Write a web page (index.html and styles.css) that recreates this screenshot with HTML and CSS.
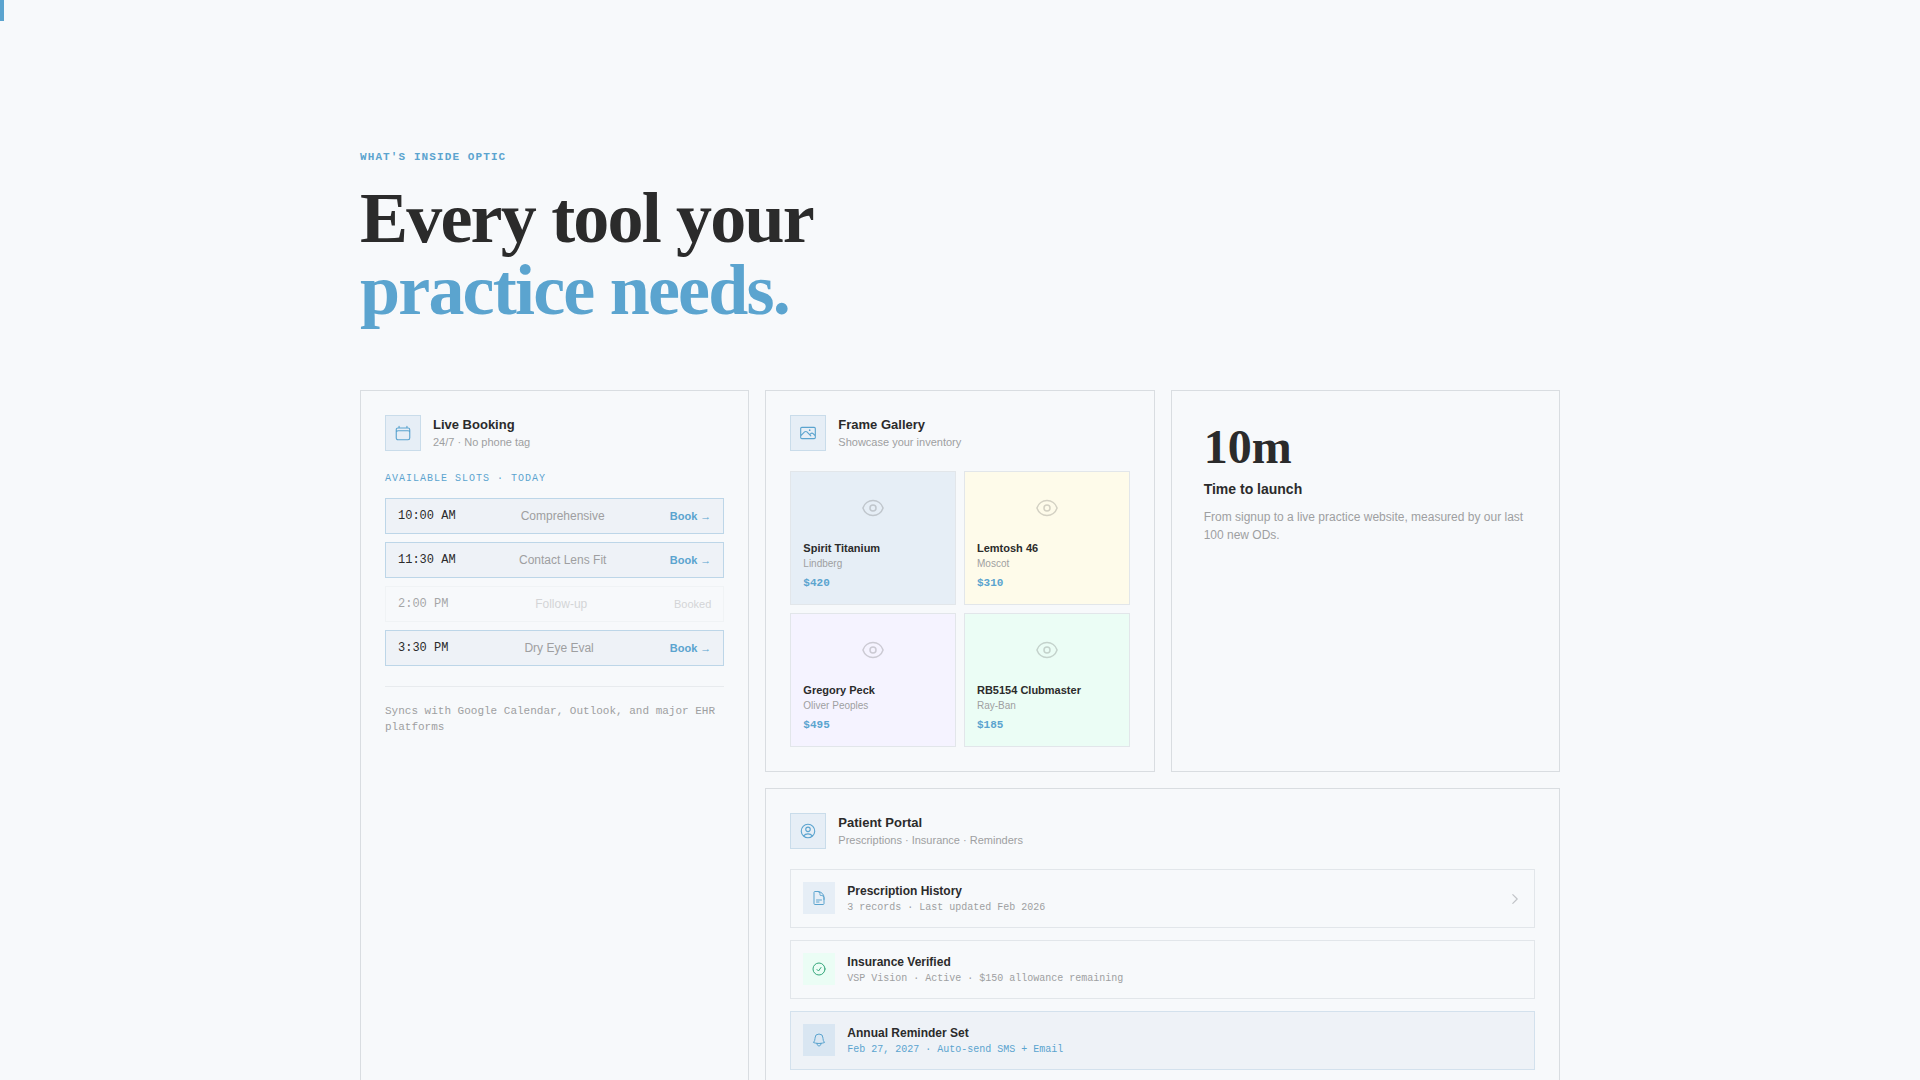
FILE: index.html
```
<!DOCTYPE html>
<html lang="en">
<head>
    <meta charset="UTF-8">
    <meta name="viewport" content="width=device-width, initial-scale=1.0">
    <title>Optic - Features</title>
    <link rel="stylesheet" href="styles.css">
</head>
<body>

    <div class="scroll-progress"></div>

    <section class="features">
        <p class="eyebrow">WHAT'S INSIDE OPTIC</p>
        <h1>Every tool your<br><span class="accent">practice needs.</span></h1>

        <div class="bento">

            <!-- Live booking -->
            <article class="card card-booking">
                <header class="card-head">
                    <span class="icon-box">
                        <svg class="icon" viewBox="0 0 24 24"><path d="M6.75 3v2.25M17.25 3v2.25M3 18.75V7.5a2.25 2.25 0 0 1 2.25-2.25h13.5A2.25 2.25 0 0 1 21 7.5v11.25m-18 0A2.25 2.25 0 0 0 5.25 21h13.5A2.25 2.25 0 0 0 21 18.75m-18 0v-7.5A2.25 2.25 0 0 1 5.25 9h13.5A2.25 2.25 0 0 1 21 11.25v7.5"/></svg>
                    </span>
                    <div>
                        <h2>Live Booking</h2>
                        <p>24/7 · No phone tag</p>
                    </div>
                </header>
                <p class="slots-label">AVAILABLE SLOTS · TODAY</p>
                <ul class="slots">
                    <li class="slot"><span class="time">10:00 AM</span><span class="type">Comprehensive</span><button type="button">Book →</button></li>
                    <li class="slot"><span class="time">11:30 AM</span><span class="type">Contact Lens Fit</span><button type="button">Book →</button></li>
                    <li class="slot booked"><span class="time">2:00 PM</span><span class="type">Follow-up</span><span class="status">Booked</span></li>
                    <li class="slot"><span class="time">3:30 PM</span><span class="type">Dry Eye Eval</span><button type="button">Book →</button></li>
                </ul>
                <p class="sync-note">Syncs with Google Calendar, Outlook, and major EHR platforms</p>
            </article>

            <!-- Frame gallery -->
            <article class="card">
                <header class="card-head">
                    <span class="icon-box">
                        <svg class="icon" viewBox="0 0 24 24"><path d="m2.25 15.75 5.159-5.159a2.25 2.25 0 0 1 3.182 0l5.159 5.159m-1.5-1.5 1.409-1.409a2.25 2.25 0 0 1 3.182 0l2.909 2.909m-18 3.75h16.5a1.5 1.5 0 0 0 1.5-1.5V6a1.5 1.5 0 0 0-1.5-1.5H3.75A1.5 1.5 0 0 0 2.25 6v12a1.5 1.5 0 0 0 1.5 1.5Zm10.5-11.25h.008v.008h-.008V8.25Zm.375 0a.375.375 0 1 1-.75 0 .375.375 0 0 1 .75 0Z"/></svg>
                    </span>
                    <div>
                        <h2>Frame Gallery</h2>
                        <p>Showcase your inventory</p>
                    </div>
                </header>
                <div class="frames">
                    <div class="frame blue">
                        <div class="frame-preview"><svg class="icon eye" viewBox="0 0 24 24"><path d="M2.036 12.322a1.012 1.012 0 0 1 0-.639C3.423 7.51 7.36 4.5 12 4.5c4.638 0 8.573 3.007 9.963 7.178.07.207.07.431 0 .639C20.577 16.49 16.64 19.5 12 19.5c-4.638 0-8.573-3.007-9.963-7.178Z"/><path d="M15 12a3 3 0 1 1-6 0 3 3 0 0 1 6 0Z"/></svg></div>
                        <h3>Spirit Titanium</h3>
                        <p class="brand">Lindberg</p>
                        <p class="price">$420</p>
                    </div>
                    <div class="frame yellow">
                        <div class="frame-preview"><svg class="icon eye" viewBox="0 0 24 24"><path d="M2.036 12.322a1.012 1.012 0 0 1 0-.639C3.423 7.51 7.36 4.5 12 4.5c4.638 0 8.573 3.007 9.963 7.178.07.207.07.431 0 .639C20.577 16.49 16.64 19.5 12 19.5c-4.638 0-8.573-3.007-9.963-7.178Z"/><path d="M15 12a3 3 0 1 1-6 0 3 3 0 0 1 6 0Z"/></svg></div>
                        <h3>Lemtosh 46</h3>
                        <p class="brand">Moscot</p>
                        <p class="price">$310</p>
                    </div>
                    <div class="frame purple">
                        <div class="frame-preview"><svg class="icon eye" viewBox="0 0 24 24"><path d="M2.036 12.322a1.012 1.012 0 0 1 0-.639C3.423 7.51 7.36 4.5 12 4.5c4.638 0 8.573 3.007 9.963 7.178.07.207.07.431 0 .639C20.577 16.49 16.64 19.5 12 19.5c-4.638 0-8.573-3.007-9.963-7.178Z"/><path d="M15 12a3 3 0 1 1-6 0 3 3 0 0 1 6 0Z"/></svg></div>
                        <h3>Gregory Peck</h3>
                        <p class="brand">Oliver Peoples</p>
                        <p class="price">$495</p>
                    </div>
                    <div class="frame green">
                        <div class="frame-preview"><svg class="icon eye" viewBox="0 0 24 24"><path d="M2.036 12.322a1.012 1.012 0 0 1 0-.639C3.423 7.51 7.36 4.5 12 4.5c4.638 0 8.573 3.007 9.963 7.178.07.207.07.431 0 .639C20.577 16.49 16.64 19.5 12 19.5c-4.638 0-8.573-3.007-9.963-7.178Z"/><path d="M15 12a3 3 0 1 1-6 0 3 3 0 0 1 6 0Z"/></svg></div>
                        <h3>RB5154 Clubmaster</h3>
                        <p class="brand">Ray-Ban</p>
                        <p class="price">$185</p>
                    </div>
                </div>
            </article>

            <!-- Launch time -->
            <article class="card card-stat">
                <p class="stat">10m</p>
                <h2>Time to launch</h2>
                <p class="stat-text">From signup to a live practice website, measured by our last 100 new ODs.</p>
            </article>

            <!-- Patient portal -->
            <article class="card card-portal">
                <header class="card-head">
                    <span class="icon-box">
                        <svg class="icon" viewBox="0 0 24 24"><path d="M17.982 18.725A7.488 7.488 0 0 0 12 15.75a7.488 7.488 0 0 0-5.982 2.975m11.963 0a9 9 0 1 0-11.963 0m11.963 0A8.966 8.966 0 0 1 12 21a8.966 8.966 0 0 1-5.982-2.275M15 9.75a3 3 0 1 1-6 0 3 3 0 0 1 6 0Z"/></svg>
                    </span>
                    <div>
                        <h2>Patient Portal</h2>
                        <p>Prescriptions · Insurance · Reminders</p>
                    </div>
                </header>
                <ul class="records">
                    <li class="record">
                        <span class="record-icon">
                            <svg class="icon" viewBox="0 0 24 24"><path d="M19.5 14.25v-2.625a3.375 3.375 0 0 0-3.375-3.375h-1.5A1.125 1.125 0 0 1 13.5 7.125v-1.5a3.375 3.375 0 0 0-3.375-3.375H8.25m0 12.75h7.5m-7.5 3H12M10.5 2.25H5.625c-.621 0-1.125.504-1.125 1.125v17.25c0 .621.504 1.125 1.125 1.125h12.75c.621 0 1.125-.504 1.125-1.125V11.25a9 9 0 0 0-9-9Z"/></svg>
                        </span>
                        <div class="record-text">
                            <h3>Prescription History</h3>
                            <p>3 records · Last updated Feb 2026</p>
                        </div>
                        <svg class="icon chevron" viewBox="0 0 24 24"><path d="m8.25 4.5 7.5 7.5-7.5 7.5"/></svg>
                    </li>
                    <li class="record">
                        <span class="record-icon verified">
                            <svg class="icon" viewBox="0 0 24 24"><path d="M9 12.75 11.25 15 15 9.75M21 12a9 9 0 1 1-18 0 9 9 0 0 1 18 0Z"/></svg>
                        </span>
                        <div class="record-text">
                            <h3>Insurance Verified</h3>
                            <p>VSP Vision · Active · $150 allowance remaining</p>
                        </div>
                    </li>
                    <li class="record reminder">
                        <span class="record-icon">
                            <svg class="icon" viewBox="0 0 24 24"><path d="M14.857 17.082a23.848 23.848 0 0 0 5.454-1.31A8.967 8.967 0 0 1 18 9.75V9A6 6 0 0 0 6 9v.75a8.967 8.967 0 0 1-2.312 6.022c1.733.64 3.56 1.085 5.455 1.31m5.714 0a24.255 24.255 0 0 1-5.714 0m5.714 0a3 3 0 1 1-5.714 0"/></svg>
                        </span>
                        <div class="record-text">
                            <h3>Annual Reminder Set</h3>
                            <p>Feb 27, 2027 · Auto-send SMS + Email</p>
                        </div>
                    </li>
                </ul>
            </article>

        </div>
    </section>

</body>
</html>
```

FILE: styles.css
```
* {
    box-sizing: border-box;
    margin: 0;
    padding: 0;
}
body {
    font-family: "Liberation Sans", Arial, sans-serif;
    font-size: 12px;
    line-height: 18px;
    color: #2b2b2b;
    background: #f7f9fb;
}
ul {
    list-style: none;
}
.scroll-progress {
    position: absolute;
    top: 0;
    left: 0;
    width: 4px;
    height: 21px;
    background: #5ba4cf;
}
.features {
    max-width: 1248px;
    margin: 0 auto;
    padding: 149px 24px 128px;
}
.eyebrow {
    font: bold 11px/17px "Liberation Mono", monospace;
    letter-spacing: 0.1em;
    color: #5ba4cf;
    margin-bottom: 16px;
}
h1 {
    font: bold 72px/72px "Liberation Serif", serif;
    letter-spacing: -0.025em;
    margin-bottom: 64px;
}
.accent {
    color: #5ba4cf;
}
.icon {
    width: 18px;
    height: 18px;
    fill: none;
    stroke: currentColor;
    stroke-width: 1.5;
    stroke-linecap: round;
    stroke-linejoin: round;
}

/* Cards */
.bento {
    display: grid;
    grid-template-columns: repeat(3, 1fr);
    gap: 16px;
}
.card {
    padding: 24px;
    border: 1px solid #d9dde1;
}
.card-booking {
    grid-row: span 2;
}
.card-portal {
    grid-column: span 2;
}
.card-head {
    display: flex;
    align-items: flex-start;
    gap: 12px;
    margin-bottom: 20px;
}
.card-head h2 {
    font-size: 13px;
    line-height: 20px;
}
.card-head p {
    font-size: 11px;
    line-height: 14px;
    color: #9e9fa1;
}
.icon-box {
    display: flex;
    align-items: center;
    justify-content: center;
    width: 36px;
    height: 36px;
    color: #5ba4cf;
    background: #e6eef6;
    border: 1px solid #c9dcea;
}

/* Booking */
.slots-label {
    font: 10px/15px "Liberation Mono", monospace;
    letter-spacing: 0.1em;
    color: #5ba4cf;
    margin-bottom: 12px;
}
.slots {
    display: grid;
    gap: 8px;
    margin-bottom: 20px;
}
.slot {
    display: flex;
    align-items: center;
    justify-content: space-between;
    padding: 8px 12px;
    background: #eef2f7;
    border: 1px solid #bdd6e8;
}
.time {
    font-family: "Liberation Mono", monospace;
}
.type {
    color: #9e9fa1;
}
.slot button {
    font: bold 11px/16px "Liberation Sans", Arial, sans-serif;
    color: #5ba4cf;
    background: none;
    border: none;
    cursor: pointer;
}
.booked {
    background: none;
    border-color: #e8ebee;
    opacity: 0.4;
}
.status {
    font-size: 11px;
    color: #9e9fa1;
}
.sync-note {
    font: 11px/16px "Liberation Mono", monospace;
    color: #9e9fa1;
    padding-top: 16px;
    border-top: 1px solid #e8ebee;
}

/* Frame gallery */
.frames {
    display: grid;
    grid-template-columns: 1fr 1fr;
    gap: 8px;
}
.frame {
    padding: 12px;
    border: 1px solid #e2e6ea;
}
.blue {
    background: #e6eef6;
}
.yellow {
    background: #fefbea;
}
.purple {
    background: #f5f3ff;
}
.green {
    background: #ebfdf5;
}
.frame-preview {
    display: flex;
    align-items: center;
    justify-content: center;
    height: 48px;
    margin-bottom: 8px;
}
.eye {
    width: 24px;
    height: 24px;
    color: #2b2b2b;
    opacity: 0.2;
}
.frame h3 {
    font-size: 11px;
    line-height: 16px;
}
.brand {
    font-size: 10px;
    line-height: 15px;
    color: #9e9fa1;
    margin-bottom: 4px;
}
.price {
    font: bold 11px/17px "Liberation Mono", monospace;
    color: #5ba4cf;
}

/* Stat */
.card-stat {
    padding: 32px;
}
.stat {
    font: bold 48px/48px "Liberation Serif", serif;
    margin-bottom: 8px;
}
.card-stat h2 {
    font-size: 14px;
    line-height: 21px;
    margin-bottom: 8px;
}
.stat-text {
    color: #9e9fa1;
}

/* Patient portal */
.records {
    display: grid;
    gap: 12px;
}
.record {
    display: flex;
    align-items: flex-start;
    gap: 12px;
    padding: 12px;
    border: 1px solid #e2e6ea;
}
.record-icon {
    display: flex;
    align-items: center;
    justify-content: center;
    width: 32px;
    height: 32px;
    color: #5ba4cf;
    background: #e6eef6;
}
.record-icon .icon {
    width: 16px;
    height: 16px;
}
.record-text {
    flex: 1;
}
.record h3 {
    font-size: 12px;
    line-height: 18px;
}
.record p {
    font: 10px/15px "Liberation Mono", monospace;
    color: #9e9fa1;
}
.record .verified {
    color: #34a77b;
    background: #ebfdf5;
}
.reminder {
    background: #eef2f7;
    border-color: #d3e1ed;
}
.reminder .record-icon {
    background: #d9e6f2;
}
.reminder p {
    color: #5ba4cf;
}
.record .chevron {
    align-self: center;
    width: 14px;
    height: 14px;
    color: #c0c3c7;
    stroke-width: 2;
}
```
